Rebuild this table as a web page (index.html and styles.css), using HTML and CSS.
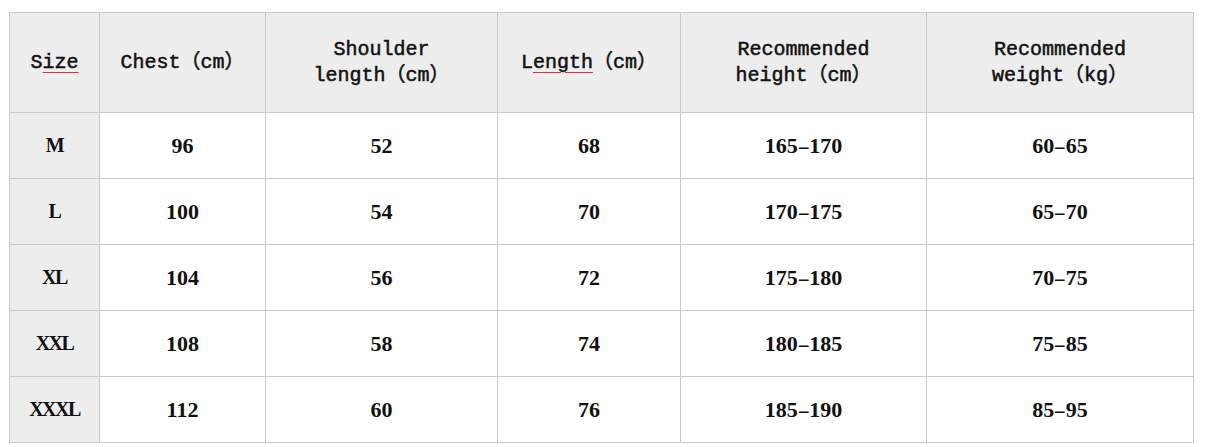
FILE: index.html
```html
<!DOCTYPE html>
<html>
<head>
<meta charset="utf-8">
<link rel="stylesheet" href="styles.css">
</head>
<body>
<div class="page">
<table class="size-table">
  <colgroup>
    <col class="c1"><col class="c2"><col class="c3"><col class="c4"><col class="c5"><col class="c6">
  </colgroup>
  <thead>
    <tr>
      <th>S<span class="spell">ize</span></th>
      <th>Chest（cm）</th>
      <th>Shoulder<br>length（cm）</th>
      <th>L<span class="spell">ength</span>（cm）</th>
      <th>Recommended<br>height（cm）</th>
      <th>Recommended<br>weight（kg）</th>
    </tr>
  </thead>
  <tbody>
    <tr><td class="size">M</td><td>96</td><td>52</td><td>68</td><td>165<span class="dash">-</span>170</td><td>60<span class="dash">-</span>65</td></tr>
    <tr><td class="size">L</td><td>100</td><td>54</td><td>70</td><td>170<span class="dash">-</span>175</td><td>65<span class="dash">-</span>70</td></tr>
    <tr><td class="size">XL</td><td>104</td><td>56</td><td>72</td><td>175<span class="dash">-</span>180</td><td>70<span class="dash">-</span>75</td></tr>
    <tr><td class="size">XXL</td><td>108</td><td>58</td><td>74</td><td>180<span class="dash">-</span>185</td><td>75<span class="dash">-</span>85</td></tr>
    <tr><td class="size">XXXL</td><td>112</td><td>60</td><td>76</td><td>185<span class="dash">-</span>190</td><td>85<span class="dash">-</span>95</td></tr>
  </tbody>
</table>
</div>
</body>
</html>
```

FILE: styles.css
```css
html, body {
  margin: 0;
  padding: 0;
  background: #ffffff;
}

.page {
  padding: 12px 0 0 9px;
}

.size-table {
  border-collapse: collapse;
  table-layout: fixed;
  width: 1184px;
  color: #111;
}

.c1 { width: 90px; }
.c2 { width: 166px; }
.c3 { width: 232px; }
.c4 { width: 183px; }
.c5 { width: 246px; }
.c6 { width: 267px; }

.size-table th,
.size-table td {
  border: 1px solid #c8c8c8;
  text-align: center;
  vertical-align: middle;
  padding: 0;
}

.size-table th {
  height: 99px;
  background: #ededed;
  font-family: "Liberation Mono", "Noto Sans CJK SC", monospace;
  font-weight: normal;
  font-size: 20px;
  line-height: 26px;
  color: #111;
  -webkit-text-stroke: 0.5px #111;
}

.size-table td {
  height: 65px;
  font-family: "Liberation Serif", serif;
  font-weight: bold;
  font-size: 22px;
  background: #ffffff;
}

.size-table td.size {
  background: #ededed;
  font-size: 20px;
  letter-spacing: -1.5px;
}

.dash {
  display: inline-block;
  margin: 0 2px;
  transform: scaleX(1.7);
  font-weight: normal;
}

.spell {
  text-decoration: underline;
  text-decoration-color: #d9333f;
  text-decoration-thickness: 1px;
  text-underline-offset: 4px;
  -webkit-text-stroke: 0.5px #111;
}
```
